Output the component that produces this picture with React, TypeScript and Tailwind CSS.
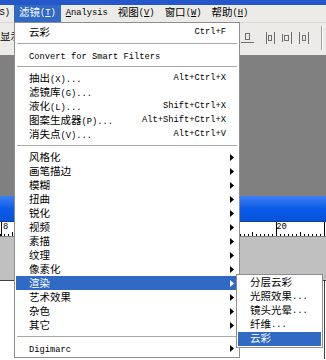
import React from "react";

type Item = {
	label?: string;
	shortcut?: string;
	arrow?: boolean;
	sep?: boolean;
	active?: boolean;
};

const FILTERS: Item[] = [
	{ label: "云彩", shortcut: "Ctrl+F" },
	{ sep: true },
	{ label: "Convert for Smart Filters" },
	{ sep: true },
	{ label: "抽出(X)...", shortcut: "Alt+Ctrl+X" },
	{ label: "滤镜库(G)..." },
	{ label: "液化(L)...", shortcut: "Shift+Ctrl+X" },
	{ label: "图案生成器(P)...", shortcut: "Alt+Shift+Ctrl+X" },
	{ label: "消失点(V)...", shortcut: "Alt+Ctrl+V" },
	{ sep: true },
	{ label: "风格化", arrow: true },
	{ label: "画笔描边", arrow: true },
	{ label: "模糊", arrow: true },
	{ label: "扭曲", arrow: true },
	{ label: "锐化", arrow: true },
	{ label: "视频", arrow: true },
	{ label: "素描", arrow: true },
	{ label: "纹理", arrow: true },
	{ label: "像素化", arrow: true },
	{ label: "渲染", arrow: true, active: true },
	{ label: "艺术效果", arrow: true },
	{ label: "杂色", arrow: true },
	{ label: "其它", arrow: true },
	{ sep: true },
	{ label: "Digimarc", arrow: true },
];

const RENDER = ["分层云彩", "光照效果...", "镜头光晕...", "纤维...", "云彩"];

const TOP_MENU = [
	{ pre: "滤镜(", key: "T", post: ")", active: true },
	{ pre: "", key: "A", post: "nalysis" },
	{ pre: "视图(", key: "V", post: ")" },
	{ pre: "窗口(", key: "W", post: ")" },
	{ pre: "帮助(", key: "H", post: ")" },
];

// ascii runs get the narrow mono size, everything else the cjk size
function Txt({ s }: { s: string }) {
	const parts = s.match(/[\x00-\x7f]+|[^\x00-\x7f]+/g) ?? [];
	return (
		<>
			{parts.map((p, i) =>
				/^[\x00-\x7f]/.test(p) ? (
					<span key={i} className="text-[8.75px] whitespace-pre">
						{p}
					</span>
				) : (
					<span key={i} className="text-[10.5px]">
						{p}
					</span>
				),
			)}
		</>
	);
}

function Arrow({ white }: { white?: boolean }) {
	return (
		<svg width="4" height="7" viewBox="0 0 4 7">
			<path d="M0 0 L4 3.5 L0 7 Z" fill={white ? "#fff" : "#000"} />
		</svg>
	);
}

function Ruler() {
	const ticks = [];
	for (let x = -12; x <= 330; x += 4) {
		const step = Math.round((x - 276) / 4);
		const major = step % 12 === 0;
		const mid = step % 6 === 0;
		const h = major ? 15 : mid ? 5 : 3;
		ticks.push(
			<line key={x} x1={x + 0.5} x2={x + 0.5} y1={15 - h} y2={15} stroke="#000" strokeWidth="1" />,
		);
	}
	return (
		<div className="relative h-[15px] bg-white overflow-hidden border-b border-[#808080]">
			<svg width="326" height="15" className="absolute left-0 top-0">
				{ticks}
				<line x1="1.5" x2="1.5" y1="0" y2="15" stroke="#000" />
			</svg>
			<div className="relative flex h-full items-start pt-[1px] font-['Liberation_Mono',monospace] text-[8.75px] leading-none">
				<span className="ml-[3px]">8</span>
				<span className="ml-[268px]">20</span>
			</div>
		</div>
	);
}

// align / distribute buttons of the options bar, one drawing
function AlignIcons() {
	return (
		<svg width="85" height="24" viewBox="0 0 85 24" className="shrink-0">
			<g fill="none" stroke="#6e6e6e" strokeWidth="1">
				<rect x="4.5" y="7.5" width="4" height="6" />
				<path d="M0 16.5 H13" />
				<path d="M25.5 6 V18 M33.5 6 V18" />
				<rect x="27.5" y="9.5" width="3" height="5" />
				<path d="M41.5 8 V16 M50.5 6 V18" />
				<rect x="43.5" y="9.5" width="4" height="5" />
				<path d="M58.5 6 V18 M67.5 6 V18" />
				<rect x="61.5" y="9.5" width="3" height="5" />
			</g>
			<path d="M80.5 0 V24" stroke="#a0a0a0" />
			<path d="M81.5 0 V24" stroke="#ffffff" />
		</svg>
	);
}

function FilterMenu() {
	return (
		<div className="absolute left-[14px] top-[22px] w-[226px] bg-white border border-[#8e8e8e] px-[1px] pt-[2px] pb-[2px] font-['Liberation_Mono','Noto_Sans_CJK_SC',monospace] text-black">
			{FILTERS.map((it, i) =>
				it.sep ? (
					<div key={i} className="h-[9px] flex items-center px-[1px]">
						<div className="h-px w-full bg-[#a8a8a8]" />
					</div>
				) : (
					<div
						key={i}
						className={`h-[14px] flex items-center pl-[13px] pr-[4px] leading-none ${it.active ? "bg-[#316ac5] text-white" : ""}`}
					>
						<span className="flex-1 whitespace-nowrap">
							<Txt s={it.label ?? ""} />
						</span>
						{it.shortcut && <span className="text-[8.75px] whitespace-nowrap">{it.shortcut}</span>}
						<span className="w-[8px] flex justify-end">{it.arrow && <Arrow white={it.active} />}</span>
					</div>
				),
			)}
		</div>
	);
}

function RenderMenu() {
	return (
		<div className="absolute left-[236px] top-[274px] w-[87px] bg-white border border-[#8e8e8e] p-[1px] font-['Liberation_Mono','Noto_Sans_CJK_SC',monospace] text-black">
			{RENDER.map((s, i) => (
				<div
					key={s + i}
					className={`h-[14px] flex items-center pl-[12px] leading-none whitespace-nowrap ${i === RENDER.length - 1 ? "bg-[#316ac5] text-white" : ""}`}
				>
					<Txt s={s} />
				</div>
			))}
		</div>
	);
}

export default function App() {
	return (
		<div className="relative w-[326px] h-[360px] overflow-hidden bg-white font-['Liberation_Mono','Noto_Sans_CJK_SC',monospace] text-black">
			{/* title strip */}
			<div className="h-[5px] bg-[#2457c9]" />

			{/* menu bar */}
			<div className="h-[17px] flex items-stretch bg-[#ecebe7] leading-none">
				<div className="w-[14px] pr-[4px] flex items-center justify-end overflow-hidden whitespace-nowrap">
					<Txt s="示(S)" />
				</div>
				{TOP_MENU.map((m) => (
					<div
						key={m.key}
						className={`px-[5px] flex items-center whitespace-nowrap ${m.active ? "bg-[#316ac5] text-white" : ""}`}
					>
						<Txt s={m.pre} />
						<span className="text-[8.75px] underline underline-offset-1">{m.key}</span>
						<Txt s={m.post} />
					</div>
				))}
			</div>

			{/* options toolbar */}
			<div className="h-[33px] bg-[#ecebe7] flex items-center justify-between border-t border-[#d8d8d8] pb-[3px]">
				<span className="text-[10.5px] leading-none w-[14px] shrink-0 whitespace-nowrap overflow-hidden">显示</span>
				<AlignIcons />
			</div>

			{/* workspace */}
			<div className="h-[141px] bg-[#808080]" />
			<div className="h-[26px] bg-gradient-to-b from-[#3d80f4] via-[#0a5ce8] to-[#0752d8] border-b border-[#0a3fa8]" />
			<Ruler />
			<div className="h-[44px] bg-[#c0c0c0] border-b border-[#404040]" />
			<div className="h-[78px] bg-white border-r border-[#404040] w-[325px]" />

			<FilterMenu />
			<RenderMenu />
		</div>
	);
}
